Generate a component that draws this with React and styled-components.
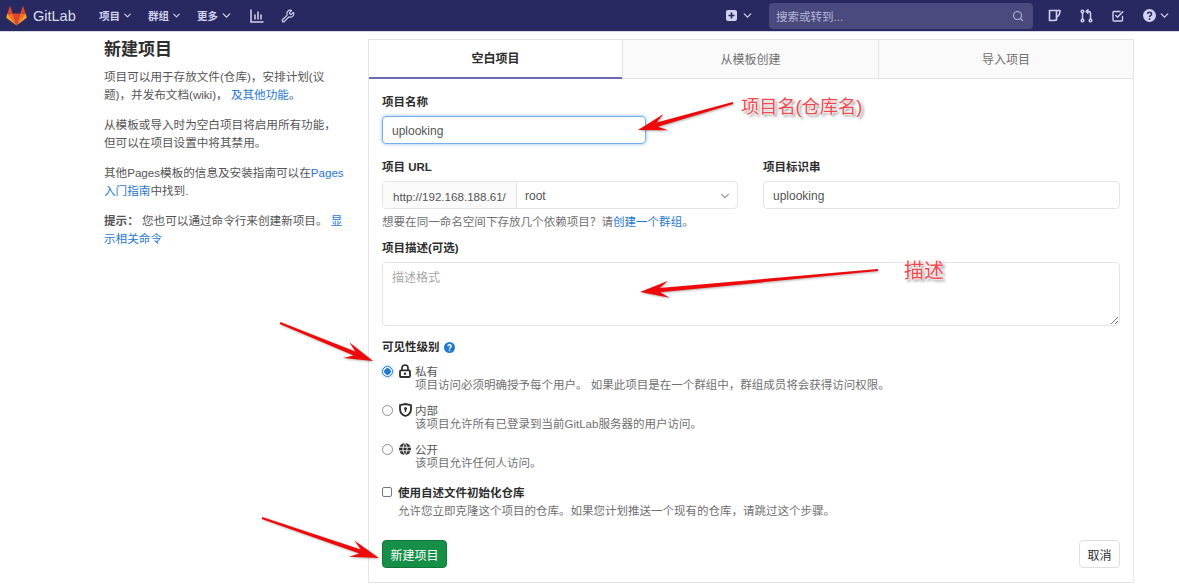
import React from "react";
import styled, { createGlobalStyle } from "styled-components";
import { ChevronDown, Search, Wrench } from "lucide-react";

const GlobalStyle = createGlobalStyle`
  html, body {
    margin: 0;
    padding: 0;
    background: #fff;
    overflow: hidden;
  }
  * { box-sizing: border-box; }
  body {
    font-family: "Liberation Sans", "Noto Sans CJK SC", sans-serif;
    color: #2e2e2e;
  }
`;

const Page = styled.div`
  position: relative;
  width: 1179px;
  height: 584px;
  overflow: hidden;
`;

const Navbar = styled.header`
  display: flex;
  align-items: center;
  height: 32px;
  padding: 0 8px 0 6px;
  background: #292961;
  border-bottom: 1px solid #d6d6e4;
  color: #d1d1f0;
`;

const Brand = styled.div`
  display: flex;
  align-items: center;
  gap: 6px;
  width: 93px;
  color: #dcdcf0;
  font-size: 14.5px;
`;

const NavMenu = styled.nav`
  display: flex;
  align-items: center;
  gap: 15px;
  flex: 1;
`;

const NavItem = styled.span`
  display: flex;
  align-items: center;
  gap: 2px;
  font-size: 10.5px;
  font-weight: 700;
  color: #d1d1f0;
`;

const NavIcons = styled.div`
  display: flex;
  align-items: center;
  gap: 17px;
  margin-left: 2px;
`;

const NavRight = styled.div`
  display: flex;
  align-items: center;
`;

const NewMenu = styled.span`
  display: flex;
  align-items: center;
  gap: 4px;
  margin-right: 15px;
`;

const SearchBox = styled.div`
  display: flex;
  align-items: center;
  justify-content: space-between;
  width: 264px;
  height: 26px;
  padding: 0 9px 0 7px;
  margin-right: 15px;
  border-radius: 4px;
  background: #4a4a7e;
  color: #b5b5d8;
  font-size: 11.5px;
`;

const RightIcons = styled.div`
  display: flex;
  align-items: center;
  gap: 19px;
`;

const Layout = styled.main`
  display: flex;
  align-items: flex-start;
  padding: 7px 45px 0 104px;
`;

const Sidebar = styled.aside`
  flex: none;
  width: 241px;
  margin-right: 23px;
  font-size: 11.6px;
  line-height: 17.5px;
  color: #555;
`;

const Title = styled.h1`
  margin: 0 0 7px;
  font-size: 17px;
  line-height: 22px;
  font-weight: 700;
  color: #2e2e2e;
`;

const Paragraph = styled.p`
  margin: 0 0 13px;
`;

const TextLink = styled.a`
  color: #1f78d1;
  text-decoration: none;
`;

const Card = styled.section`
  width: 766px;
  height: 544px;
  border: 1px solid #e5e5e5;
`;

const Tabs = styled.div`
  display: grid;
  grid-template-columns: 253px 256px 1fr;
  height: 39px;
`;

const Tab = styled.div`
  display: flex;
  align-items: center;
  justify-content: center;
  padding-bottom: 2px;
  font-size: 12px;
  font-weight: ${(p) => (p.$active ? 700 : 400)};
  color: ${(p) => (p.$active ? "#2e2e2e" : "#707070")};
  background: ${(p) => (p.$active ? "#fff" : "#fafafa")};
  border-bottom: ${(p) => (p.$active ? "2px solid #6b6bb0" : "1px solid #e5e5e5")};
  border-left: ${(p) => (p.$first ? "none" : "1px solid #e5e5e5")};
`;

const Form = styled.div`
  padding: 15px 14px 0 13px;
`;

const Label = styled.div`
  font-size: 11.5px;
  line-height: 16px;
  font-weight: 700;
  color: #2e2e2e;
  margin-bottom: 6px;
`;

const NameInput = styled.div`
  display: flex;
  align-items: center;
  width: 264px;
  height: 28px;
  padding: 2px 9px 0;
  margin-bottom: 15px;
  font-size: 12px;
  color: #555;
  border: 1px solid #73afea;
  border-radius: 4px;
  box-shadow: 0 0 3px 1px rgba(31, 120, 209, 0.3);
`;

const UrlRow = styled.div`
  display: grid;
  grid-template-columns: 356px 357px;
  column-gap: 25px;
`;

const InputGroup = styled.div`
  display: flex;
  height: 28px;
  font-size: 12px;
  color: #555;
  border: 1px solid #e5e5e5;
  border-radius: 4px;
`;

const Prefix = styled.div`
  display: flex;
  align-items: center;
  width: 134px;
  padding: 2px 0 0 10px;
  font-size: 11.6px;
  background: #fafafa;
  border-right: 1px solid #e5e5e5;
  white-space: nowrap;
`;

const SelectBox = styled.div`
  display: flex;
  align-items: center;
  justify-content: space-between;
  flex: 1;
  padding: 2px 5px 0 8px;
  color: #555;
`;

const SlugInput = styled.div`
  display: flex;
  align-items: center;
  height: 28px;
  padding: 2px 9px 0;
  font-size: 12px;
  color: #555;
  border: 1px solid #e5e5e5;
  border-radius: 4px;
`;

const HelpText = styled.div`
  margin: 5px 0 10px;
  font-size: 11.55px;
  line-height: 16px;
  color: #707070;
`;

const TextArea = styled.div`
  position: relative;
  height: 64px;
  width: 738px;
  padding: 6px 9px;
  margin-bottom: 13px;
  font-size: 12px;
  line-height: 18px;
  color: #a7a7a7;
  border: 1px solid #e5e5e5;
  border-radius: 4px;
`;

const Grip = styled.svg`
  position: absolute;
  right: 1px;
  bottom: 1px;
`;

const LevelLabel = styled(Label)`
  display: flex;
  align-items: center;
  gap: 4px;
  margin-bottom: 8px;
`;

const Option = styled.div`
  display: flex;
  align-items: flex-start;
  margin-bottom: ${(p) => p.$gap || 10}px;
`;

const Radio = styled.span`
  flex: none;
  width: 11px;
  height: 11px;
  margin: 3px 6px 0 0;
  border-radius: 50%;
  border: 1px solid ${(p) => (p.$checked ? "#1f78d1" : "#8f8f8f")};
  background: ${(p) => (p.$checked ? "radial-gradient(circle, #1f78d1 0 3px, #fff 3.5px)" : "#fff")};
  box-shadow: ${(p) => (p.$checked ? "0 0 2px 1px rgba(31, 120, 209, 0.25)" : "none")};
`;

const OptionIcon = styled.span`
  display: flex;
  flex: none;
  width: 16px;
  height: 16px;
  align-items: center;
  color: #2e2e2e;
`;

const OptionBody = styled.div`
  font-size: 11.5px;
  line-height: 13px;
  padding-top: 3px;
  color: #555;
`;

const OptionNote = styled.div`
  color: #707070;
  white-space: nowrap;
`;

const Checkbox = styled.span`
  flex: none;
  width: 10px;
  height: 10px;
  margin: 3px 6px 0 0;
  border-radius: 2px;
  border: 1px solid #777;
  background: #fff;
`;

const CheckBody = styled.div`
  font-size: 11.5px;
  line-height: 18px;
`;

const CheckTitle = styled.div`
  font-weight: 700;
  color: #2e2e2e;
`;

const Actions = styled.div`
  display: flex;
  justify-content: space-between;
  width: 738px;
  margin-top: 20px;
`;

const PrimaryButton = styled.button`
  width: 65px;
  height: 28px;
  padding: 0;
  font: inherit;
  font-size: 12px;
  color: #fff;
  background: #168f48;
  border: 1px solid #12753a;
  border-radius: 4px;
`;

const CancelButton = styled.button`
  width: 41px;
  height: 28px;
  padding: 0;
  font: inherit;
  font-size: 12px;
  color: #2e2e2e;
  background: #fff;
  border: 1px solid #dfdfdf;
  border-radius: 4px;
`;

const ArrowLayer = styled.svg`
  position: absolute;
  inset: 0;
  pointer-events: none;
  filter: drop-shadow(1px 1px 1px rgba(0, 0, 0, 0.3));
`;

const Note = styled.span`
  position: absolute;
  left: ${(p) => p.$x}px;
  top: ${(p) => p.$y}px;
  font-size: ${(p) => p.$size}px;
  line-height: 26px;
  white-space: nowrap;
  color: #f0484f;
  text-shadow: 0 0 2px #fff, 0 0 2px #fff, 0 0 3px #fff, 2px 2px 3px rgba(0, 0, 0, 0.55);
`;

// thin tail, wider shaft, barbed head
const arrowPoints = ([x1, y1], [x2, y2]) => {
  const len = Math.hypot(x2 - x1, y2 - y1);
  const ux = (x2 - x1) / len;
  const uy = (y2 - y1) / len;
  const at = (along, side) => `${x2 - ux * along - uy * side},${y2 - uy * along + ux * side}`;
  return [
    at(len, 1),
    at(20, 2.2),
    at(29, 8.5),
    at(0, 0),
    at(29, -8.5),
    at(20, -2.2),
    at(len, -1),
  ].join(" ");
};

const arrows = [
  [[733, 103], [638, 130]],
  [[878, 270], [640, 292]],
  [[280, 323], [373, 361]],
  [[262, 518], [379, 558]],
];

const Tanuki = () => (
  <svg width="21" height="20" viewBox="0 0 21 20">
    <path d="M10.5 19.5 14.3 7.4H6.7z" fill="#e24329" />
    <path d="M10.5 19.5 6.7 7.4H1.4z" fill="#fc6d26" />
    <path d="M1.4 7.4.3 11c-.1.3 0 .7.3.9l9.9 7.6z" fill="#fca326" />
    <path d="M1.4 7.4h5.3L4.4.6c-.1-.4-.6-.4-.7 0z" fill="#e24329" />
    <path d="M10.5 19.5 14.3 7.4h5.3z" fill="#fc6d26" />
    <path d="M19.6 7.4 20.7 11c.1.3 0 .7-.3.9l-9.9 7.6z" fill="#fca326" />
    <path d="M19.6 7.4h-5.3L16.6.6c.1-.4.6-.4.7 0z" fill="#e24329" />
  </svg>
);

const Bars = () => (
  <svg width="14" height="14" viewBox="0 0 14 14" fill="none" stroke="#d1d1f0" strokeWidth="1.5" strokeLinecap="round">
    <path d="M1 1v12h12M5 6v4M8 3v7M11 6v4" />
  </svg>
);

const PlusBox = () => (
  <svg width="11" height="11" viewBox="0 0 11 11">
    <rect width="11" height="11" rx="2" fill="#d1d1f0" />
    <path d="M5.5 2.5v6M2.5 5.5h6" stroke="#292961" strokeWidth="1.7" />
  </svg>
);

const IssuesIcon = () => (
  <svg width="13" height="13" viewBox="0 0 13 13" fill="none" stroke="#d1d1f0" strokeWidth="1.6" strokeLinejoin="round">
    <path d="M1.500 1.500H8.500V11C7 11.500 5 11.500 1.500 11.500z" />
    <path d="M8.500 1.500H12C12 5 10.500 7.500 8 8" />
  </svg>
);

const MergeIcon = () => (
  <svg width="13" height="14" viewBox="0 0 13 14" fill="none" stroke="#d1d1f0" strokeWidth="1.5" strokeLinecap="round" strokeLinejoin="round">
    <circle cx="2.5" cy="2.5" r="1.3" />
    <circle cx="2.5" cy="11.5" r="1.3" />
    <circle cx="10.5" cy="11.5" r="1.3" />
    <path d="M2.5 4v6M10.5 10V4c0-1-.6-1.6-1.6-1.6H6.500M8 .7 6.200 2.400 8 4.100" />
  </svg>
);

const TodoIcon = () => (
  <svg width="12" height="12" viewBox="0 0 12 12" fill="none" stroke="#d1d1f0" strokeWidth="1.4" strokeLinecap="round" strokeLinejoin="round">
    <path d="M10.5 6.500V10a1 1 0 0 1-1 1H2a1 1 0 0 1-1-1V2.500a1 1 0 0 1 1-1h6" />
    <path d="M3.800 5.500 5.500 7.200 10.800 1.800" />
  </svg>
);

const HelpDot = ({ size, bg, fg }) => (
  <svg width={size} height={size} viewBox="0 0 14 14">
    <circle cx="7" cy="7" r="7" fill={bg} />
    <path d="M4.900 5.400C5 4.200 5.900 3.500 7 3.500c1.200 0 2.200.8 2.200 1.900 0 1.800-2.200 1.600-2.200 3.200" fill="none" stroke={fg} strokeWidth="1.700" />
    <circle cx="7" cy="10.700" r="1" fill={fg} />
  </svg>
);

const LockIcon = () => (
  <svg width="12" height="14" viewBox="0 0 12 14" fill="none" stroke="#2e2e2e">
    <path d="M3 6.500V4a3 3 0 0 1 6 0v2.500" strokeWidth="1.700" />
    <rect x="1" y="6.300" width="10" height="6.700" rx="1" strokeWidth="1.800" />
    <circle cx="6" cy="9.700" r="1.200" fill="#2e2e2e" stroke="none" />
  </svg>
);

const ShieldIcon = () => (
  <svg width="13" height="14" viewBox="0 0 13 14" fill="none" stroke="#2e2e2e" strokeWidth="1.800">
    <path d="M1 2.200 6.500 1 12 2.200V6c0 3.500-2.300 6-5.500 7C3.300 12 1 9.500 1 6z" />
    <circle cx="6.500" cy="5.500" r="1.500" fill="#2e2e2e" stroke="none" />
    <path d="M6.500 6v3" strokeWidth="1.400" />
  </svg>
);

const GlobeIcon = () => (
  <svg width="12" height="12" viewBox="0 0 12 12">
    <circle cx="6" cy="6" r="6" fill="#2e2e2e" />
    <path d="M0 4.200h12M0 7.800h12M6 0C3.300 3.500 3.300 8.500 6 12M6 0c2.700 3.500 2.700 8.500 0 12" fill="none" stroke="#fff" strokeWidth=".9" />
  </svg>
);

const Chevron = ({ size = 11 }) => <ChevronDown size={size} strokeWidth={2.4} />;

export default function App() {
  return (
    <Page>
      <GlobalStyle />
      <Navbar>
        <Brand>
          <Tanuki />
          GitLab
        </Brand>
        <NavMenu>
          <NavItem>项目 <Chevron /></NavItem>
          <NavItem>群组 <Chevron /></NavItem>
          <NavItem>更多 <Chevron size={13} /></NavItem>
          <NavIcons>
            <Bars />
            <Wrench size={14} strokeWidth={2} />
          </NavIcons>
        </NavMenu>
        <NavRight>
          <NewMenu>
            <PlusBox />
            <Chevron size={13} />
          </NewMenu>
          <SearchBox>
            搜索或转到...
            <Search size={12} strokeWidth={2.2} />
          </SearchBox>
          <RightIcons>
            <IssuesIcon />
            <MergeIcon />
            <TodoIcon />
            <NavItem>
              <HelpDot size={13} bg="#d1d1f0" fg="#292961" />
              <Chevron size={13} />
            </NavItem>
          </RightIcons>
        </NavRight>
      </Navbar>

      <Layout>
        <Sidebar>
          <Title>新建项目</Title>
          <Paragraph>
            项目可以用于存放文件(仓库)，安排计划(议题)，并发布文档(wiki)， <TextLink>及其他功能</TextLink>。
          </Paragraph>
          <Paragraph>从模板或导入时为空白项目将启用所有功能，但可以在项目设置中将其禁用。</Paragraph>
          <Paragraph>
            其他Pages模板的信息及安装指南可以在<TextLink>Pages入门指南</TextLink>中找到.
          </Paragraph>
          <Paragraph>
            <strong>提示：</strong> 您也可以通过命令行来创建新项目。 <TextLink>显示相关命令</TextLink>
          </Paragraph>
        </Sidebar>

        <Card>
          <Tabs>
            <Tab $active $first>空白项目</Tab>
            <Tab>从模板创建</Tab>
            <Tab>导入项目</Tab>
          </Tabs>
          <Form>
            <Label>项目名称</Label>
            <NameInput>uplooking</NameInput>
            <UrlRow>
              <div>
                <Label>项目 URL</Label>
                <InputGroup>
                  <Prefix>http://192.168.188.61/</Prefix>
                  <SelectBox>
                    root
                    <ChevronDown size={14} color="#a0a0a0" />
                  </SelectBox>
                </InputGroup>
              </div>
              <div>
                <Label>项目标识串</Label>
                <SlugInput>uplooking</SlugInput>
              </div>
            </UrlRow>
            <HelpText>
              想要在同一命名空间下存放几个依赖项目？请<TextLink>创建一个群组</TextLink>。
            </HelpText>
            <Label>项目描述(可选)</Label>
            <TextArea>
              描述格式
              <Grip width="8" height="8" viewBox="0 0 8 8" stroke="#777" strokeWidth="1">
                <path d="M1 8 8 1M5 8 8 5" />
              </Grip>
            </TextArea>
            <LevelLabel>
              可见性级别
              <HelpDot size={11} bg="#1f78d1" fg="#fff" />
            </LevelLabel>
            <Option>
              <Radio $checked />
              <OptionIcon><LockIcon /></OptionIcon>
              <OptionBody>
                私有
                <OptionNote>项目访问必须明确授予每个用户。 如果此项目是在一个群组中，群组成员将会获得访问权限。</OptionNote>
              </OptionBody>
            </Option>
            <Option>
              <Radio />
              <OptionIcon><ShieldIcon /></OptionIcon>
              <OptionBody>
                内部
                <OptionNote>该项目允许所有已登录到当前GitLab服务器的用户访问。</OptionNote>
              </OptionBody>
            </Option>
            <Option $gap={14}>
              <Radio />
              <OptionIcon><GlobeIcon /></OptionIcon>
              <OptionBody>
                公开
                <OptionNote>该项目允许任何人访问。</OptionNote>
              </OptionBody>
            </Option>
            <Option>
              <Checkbox />
              <CheckBody>
                <CheckTitle>使用自述文件初始化仓库</CheckTitle>
                <OptionNote>允许您立即克隆这个项目的仓库。如果您计划推送一个现有的仓库，请跳过这个步骤。</OptionNote>
              </CheckBody>
            </Option>
            <Actions>
              <PrimaryButton>新建项目</PrimaryButton>
              <CancelButton>取消</CancelButton>
            </Actions>
          </Form>
        </Card>
      </Layout>

      <ArrowLayer width="1179" height="584" viewBox="0 0 1179 584">
        {arrows.map(([from, to], i) => (
          <polygon key={i} points={arrowPoints(from, to)} fill="#ee0a0a" />
        ))}
      </ArrowLayer>
      <Note $x={741} $y={94} $size={18.2}>项目名(仓库名)</Note>
      <Note $x={904} $y={258} $size={20}>描述</Note>
    </Page>
  );
}
